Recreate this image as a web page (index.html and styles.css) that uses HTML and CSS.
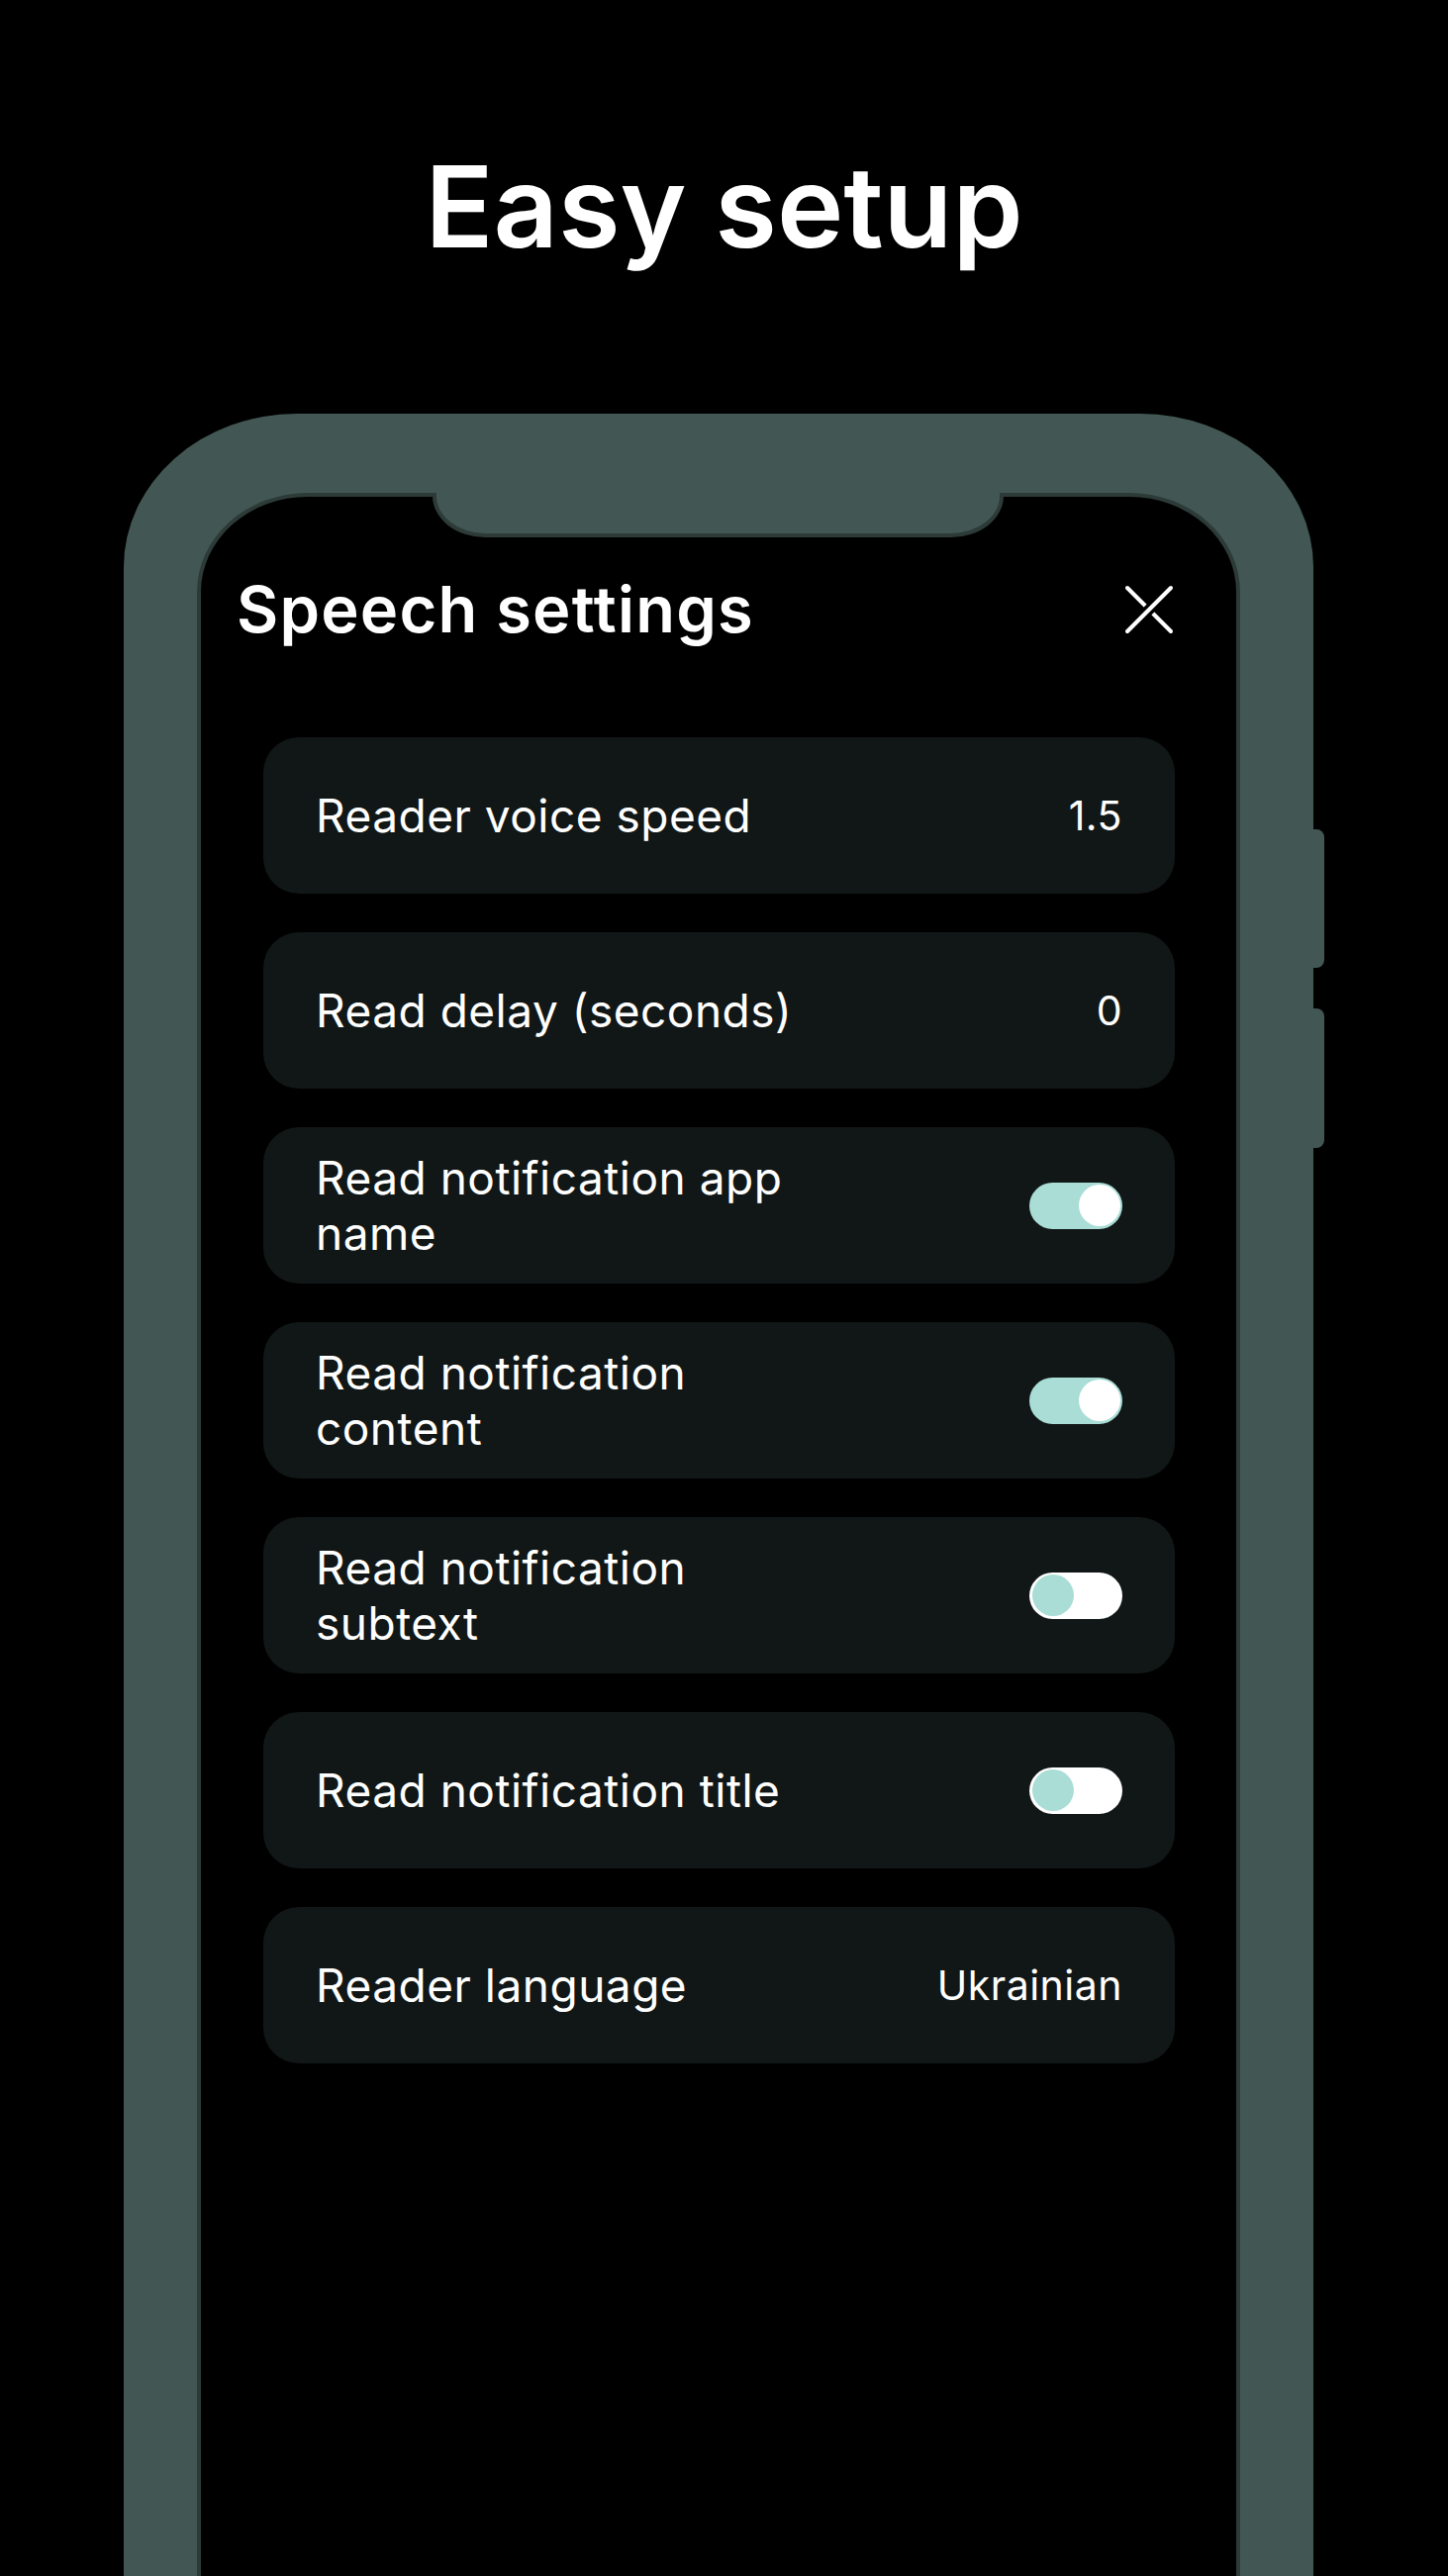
FILE: index.html
```html
<!DOCTYPE html>
<html lang="en">
<head>
<meta charset="utf-8">
<title>Easy setup</title>
<link rel="stylesheet" href="styles.css">
</head>
<body>
<main class="page">
  <h1 class="headline">Easy setup</h1>
  <div class="phone">
    <span class="side-btn side-btn--upper"></span>
    <span class="side-btn side-btn--lower"></span>
    <div class="screen">
      <div class="notch"></div>
      <header class="sheet-header">
        <h2 class="sheet-title">Speech settings</h2>
        <button class="close" type="button" aria-label="Close">
          <svg viewBox="0 0 50 50" width="50" height="50">
            <line x1="3" y1="3" x2="47" y2="47" stroke="#fff" stroke-width="4" stroke-linecap="round"/>
            <line x1="3" y1="47" x2="47" y2="3" stroke="#000" stroke-width="11" stroke-linecap="butt"/>
            <line x1="3" y1="47" x2="47" y2="3" stroke="#fff" stroke-width="4" stroke-linecap="round"/>
          </svg>
        </button>
      </header>
      <ul class="settings">
        <li class="setting"><span class="setting-label">Reader voice speed</span><span class="setting-value">1.5</span></li>
        <li class="setting"><span class="setting-label">Read delay (seconds)</span><span class="setting-value">0</span></li>
        <li class="setting"><span class="setting-label">Read notification app name</span><span class="toggle toggle--on"><span class="knob"></span></span></li>
        <li class="setting"><span class="setting-label">Read notification content</span><span class="toggle toggle--on"><span class="knob"></span></span></li>
        <li class="setting"><span class="setting-label">Read notification subtext</span><span class="toggle"><span class="knob"></span></span></li>
        <li class="setting"><span class="setting-label">Read notification title</span><span class="toggle"><span class="knob"></span></span></li>
        <li class="setting"><span class="setting-label">Reader language</span><span class="setting-value">Ukrainian</span></li>
      </ul>
    </div>
  </div>
</main>
</body>
</html>
```
FILE: styles.css
```css
html, body {
  margin: 0;
  padding: 0;
  background: #000;
}

body {
  font-family: Inter, "Noto Sans", "Liberation Sans", sans-serif;
  color: #fff;
}

.page {
  width: 1463px;
  height: 2603px;
  overflow: hidden;
}

.headline {
  margin: 0;
  padding-top: 152px;
  font-size: 114px;
  line-height: 114px;
  font-weight: 600;
  text-align: center;
  letter-spacing: 0;
}

.phone {
  position: relative;
  box-sizing: border-box;
  margin: 152px 0 0 125px;
  width: 1202px;
  height: 2300px;
  padding: 80px 74px 0;
  background: #425753;
  border-radius: 175px 175px 0 0 / 155px 155px 0 0;
  display: flex;
}

.side-btn {
  position: absolute;
  right: -11px;
  width: 11px;
  background: #425753;
  border-radius: 0 8px 8px 0;
}

.side-btn--upper {
  top: 420px;
  height: 140px;
}

.side-btn--lower {
  top: 601px;
  height: 141px;
}

.screen {
  position: relative;
  flex: 1;
  background: #000;
  border: 4px solid #2d3b38;
  border-bottom: none;
  border-radius: 112px 112px 0 0 / 100px 100px 0 0;
}

.notch {
  position: absolute;
  top: -4px;
  left: 234px;
  box-sizing: border-box;
  width: 577px;
  height: 45px;
  background: #425753;
  border: 4px solid #2d3b38;
  border-top: none;
  border-radius: 0 0 53px 53px / 0 0 42px 42px;
}

.sheet-header {
  display: flex;
  align-items: center;
  justify-content: space-between;
  padding: 81px 63px 0 36px;
}

.sheet-title {
  margin: 0;
  font-size: 65px;
  line-height: 65px;
  font-weight: 600;
  letter-spacing: 1.2px;
}

.close {
  display: block;
  padding: 0;
  margin: 0;
  border: 0;
  background: none;
  width: 50px;
  height: 50px;
}

.close svg {
  display: block;
}

.settings {
  list-style: none;
  margin: 97px 0 0;
  padding: 0 62px 0 63px;
  display: flex;
  flex-direction: column;
  gap: 39px;
}

.setting {
  box-sizing: border-box;
  height: 158px;
  padding: 0 53px;
  background: #111716;
  border-radius: 36px;
  display: flex;
  align-items: center;
  justify-content: space-between;
}

.setting-label {
  max-width: 505px;
  font-size: 46px;
  line-height: 56px;
  font-weight: 400;
  letter-spacing: 0.5px;
}

.setting-value {
  font-size: 41px;
  font-weight: 400;
  letter-spacing: 0.5px;
}

.toggle {
  box-sizing: border-box;
  width: 94px;
  height: 47px;
  padding: 2.5px;
  border-radius: 24px;
  background: #fff;
  display: flex;
  justify-content: flex-start;
}

.toggle--on {
  background: #a9ddd6;
  justify-content: flex-end;
}

.knob {
  width: 42px;
  height: 42px;
  border-radius: 50%;
  background: #a9ddd6;
}

.toggle--on .knob {
  background: #fff;
}
```
